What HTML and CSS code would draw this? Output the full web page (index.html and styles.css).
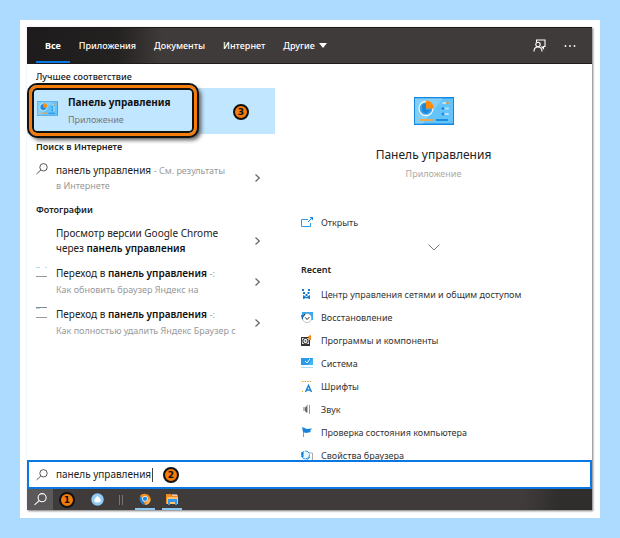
FILE: index.html
```html
<!DOCTYPE html>
<html lang="ru">
<head>
<meta charset="utf-8">
<meta name="viewport" content="width=device-width, initial-scale=1">
<title>Панель управления</title>
<link rel="stylesheet" href="styles.css">
</head>
<body>
<div class="sheet">
<div class="window">
  <header class="topbar">
    <nav class="tabs">
      <button class="tab tab-active">Все</button>
      <button class="tab">Приложения</button>
      <button class="tab">Документы</button>
      <button class="tab">Интернет</button>
      <button class="tab">Другие <svg class="caret" viewBox="0 0 8 5"><path d="M0 0h8L4 5z" fill="#fff"/></svg></button>
    </nav>
    <div class="tools">
      <button class="tool" aria-label="Отзыв"><svg width="13" height="13" viewBox="0 0 13 13" fill="none" stroke="#fff" stroke-width="1.1"><path d="M3.500 3V1H12v6.500h-1.500v2L8.500 7.500"/><circle cx="5" cy="5.500" r="2.200"/><path d="M1 12.500c0-6 8-6 8 0"/></svg></button>
      <button class="tool" aria-label="Ещё"><svg width="12" height="4" viewBox="0 0 12 4" fill="#fff"><circle cx="1.500" cy="2" r=".9"/><circle cx="6" cy="2" r=".9"/><circle cx="10.500" cy="2" r=".9"/></svg></button>
    </div>
  </header>

  <main class="content">
    <section class="results">
      <h2 class="heading heading-light">Лучшее соответствие</h2>
      <button class="best">
        <svg class="best-icon" viewBox="0 0 40 28"><use href="#panel"/></svg>
        <span class="best-text"><b>Панель управления</b><span>Приложение</span></span>
        <span class="frame"></span>
        <span class="badge badge-best">3</span>
      </button>

      <h2 class="heading">Поиск в Интернете</h2>
      <button class="row">
        <svg class="row-icon" viewBox="0 0 12 12"><use href="#lens"/></svg>
        <span class="row-text"><span class="line">панель управления <small>- См. результаты</small></span><small class="line">в Интернете</small></span>
        <svg class="arrow" viewBox="0 0 5 8"><use href="#next"/></svg>
      </button>

      <h2 class="heading">Фотографии</h2>
      <button class="row">
        <span class="row-icon"></span>
        <span class="row-text"><span class="line">Просмотр версии Google Chrome</span><span class="line">через <b>панель управления</b></span></span>
        <svg class="arrow" viewBox="0 0 5 8"><use href="#next"/></svg>
      </button>
      <button class="row row-photo">
        <svg class="row-icon" viewBox="0 0 12 12"><path d="M0 1.500h4M9 1.500h2" stroke="#a9dcf6"/><path d="M0 10.500h11" stroke="#999"/></svg>
        <span class="row-text"><span class="line">Переход в <b>панель управления</b> <small>-:</small></span><small class="line">Как обновить браузер Яндекс на</small></span>
        <svg class="arrow" viewBox="0 0 5 8"><use href="#next"/></svg>
      </button>
      <button class="row row-photo">
        <svg class="row-icon" viewBox="0 0 12 12"><path d="M0 .5h11" stroke="#888"/><path d="M0 1.500h4" stroke="#a9dcf6"/><path d="M0 10.500h11" stroke="#999"/></svg>
        <span class="row-text"><span class="line">Переход в <b>панель управления</b> <small>-:</small></span><small class="line">Как полностью удалить Яндекс Браузер с</small></span>
        <svg class="arrow" viewBox="0 0 5 8"><use href="#next"/></svg>
      </button>
    </section>

    <section class="details">
      <div class="app">
        <svg width="40" height="28" viewBox="0 0 40 28"><use href="#panel"/></svg>
        <h1 class="app-title">Панель управления</h1>
        <p class="app-kind">Приложение</p>
      </div>
      <button class="action">
        <svg class="item-icon" viewBox="0 0 12 12"><path d="M7 2.500H.5v7h9V6" fill="none" stroke="#2a9bea"/><path d="M7 5l3-3" stroke="#1683dc" fill="none"/><path d="M8.500 0H12v3.500z" fill="#1683dc"/></svg>
        Открыть
      </button>
      <button class="more" aria-label="Показать больше"><svg width="12" height="7" viewBox="0 0 12 7" fill="none" stroke="#777"><path d="M.5.5L6 6 11.500.5"/></svg></button>
      <h2 class="recent">Recent</h2>
      <ul class="list">
        <li><a class="item" href="#"><svg class="item-icon" viewBox="0 0 12 12" fill="#1b79cf"><path d="M1 0h2v2H1zM7 0h2v2H7zM2 3h2v2H2zM6.500 3h2v2h-2zM4.500 5h2v2h-2z"/><path d="M2 6l3.500 2L9 6v4H2z"/><path d="M3.500 9h4v1h-4z" fill="#bce6ff"/></svg>Центр управления сетями и общим доступом</a></li>
        <li><a class="item" href="#"><svg class="item-icon" viewBox="0 0 12 12"><path d="M1 0h11v8H1z" fill="#35a9f2"/><circle cx="6" cy="6" r="4.600" fill="#fff" stroke="#999" stroke-width=".6"/><path d="M1.500 7a4.500 4.500 0 0 1 3-5M4.500 5.500l1.500 2L8.500 5" fill="none" stroke="#333"/><path d="M0 3h4L1 7z" fill="#186fb7"/></svg>Восстановление</a></li>
        <li><a class="item" href="#"><svg class="item-icon" viewBox="0 0 12 12"><path d="M0 2h9v9H0z" fill="#333"/><path d="M1 3h7v6H1z" fill="#ddd"/><circle cx="4.500" cy="6" r="2.600" fill="#fff" stroke="#222"/><circle cx="4.500" cy="6" r=".9" fill="#555"/><path d="M7 1l3-1v5H8z" fill="#f28b18"/></svg>Программы и компоненты</a></li>
        <li><a class="item" href="#"><svg class="item-icon" viewBox="0 0 12 12"><path d="M0 0h12v7H0z" fill="#43b6f6"/><path d="M0 0h12L7 7H0z" fill="#279be9"/><path d="M4 3l2 2 3-4" fill="none" stroke="#fff"/><path d="M0 9.500h12" stroke="#a9dbf7"/></svg>Система</a></li>
        <li><a class="item" href="#"><svg class="item-icon" viewBox="0 0 12 12"><path d="M1 .5h9" stroke="#f4a21c" stroke-dasharray="1.500 1"/><path d="M1 10h1v1H1z" fill="#f4a21c"/><path d="M4.500 11l3-6.500 3 6.500M6 9h3" fill="none" stroke="#1980d7" stroke-width="1.500"/></svg>Шрифты</a></li>
        <li><a class="item" href="#"><svg class="item-icon" viewBox="0 0 12 12"><path d="M2 3h2l3-3v9L4 7H2z" fill="#bbb"/><path d="M4 4l2-2v7L4 7z" fill="#666"/><path d="M8.500 1v9" stroke="#999"/></svg>Звук</a></li>
        <li><a class="item" href="#"><svg class="item-icon" viewBox="0 0 12 12"><path d="M2.500 1v9" stroke="#999"/><path d="M1 0l5 2 5-.500-2 2.500 1 1-5 1-3-1z" fill="#1682dc"/></svg>Проверка состояния компьютера</a></li>
        <li><a class="item" href="#"><svg class="item-icon" viewBox="0 0 12 12"><path d="M5 3h6.500v8.500H3" fill="#fff" stroke="#aaa"/><circle cx="4.500" cy="5" r="4" fill="#e9f7ff" stroke="#2697e4" stroke-dasharray="5 1"/><path d="M1.500 2v5" stroke="#167bd0" stroke-width="2"/><path d="M5 8l1.500 1.500L9 7" fill="none" stroke="#2697e4"/></svg>Свойства браузера</a></li>
      </ul>
    </section>
  </main>

  <div class="search">
    <svg class="row-icon" viewBox="0 0 12 12"><use href="#lens"/></svg>
    <input class="query" type="text" aria-label="Поиск" value="панель управления">
    <span class="text-caret"></span>
    <span class="badge badge-search">2</span>
  </div>

  <footer class="taskbar">
    <button class="task task-search" aria-label="Поиск"><svg width="13" height="13" viewBox="0 0 12 12"><use href="#lens"/></svg></button>
    <span class="badge">1</span>
    <button class="task task-round" aria-label="Алиса"><svg width="13" height="13" viewBox="0 0 13 13"><circle cx="6.500" cy="6.500" r="6.200" fill="#8ecbf5"/><path d="M6.500 2.500L9 5.500c2 3 0 4-2.500 4S2 8.500 4 5.500z" fill="#fff"/></svg></button>
    <span class="divider"></span>
    <button class="task task-open" aria-label="Браузер"><svg width="12" height="12" viewBox="0 0 12 12"><path d="M1 3c2-3 8-3 10 1s-1 7-5 8z" fill="#f38a1c"/><path d="M1 3l5 9C2 11-.5 7 1 3z" fill="#1c83dc"/><path d="M6 12l3-5 2.500-1c0 3-2 6-5.500 6z" fill="#f7b45c"/><circle cx="6" cy="5.800" r="2.600" fill="#2488dd" stroke="#d8efff"/></svg></button>
    <button class="task task-open" aria-label="Проводник"><svg width="13" height="12" viewBox="0 0 13 12"><path d="M0 1h5l1 1h6v9H0z" fill="#f28a1c"/><path d="M1 4h11v7H1z" fill="#ffc273"/><path d="M2 6h9v6H9V9H4v3H2z" fill="#2f9aeb"/><path d="M6 2h5" stroke="#fff"/></svg></button>
  </footer>
</div>
</div>

<svg class="defs" width="0" height="0" aria-hidden="true">
  <symbol id="panel" viewBox="0 0 40 28">
    <path d="M0 0h40v28H0z" fill="#1687df"/><path d="M1 1.500h38v25H1z" fill="#63c3fb"/><path d="M1 1.500h28L9 26.500H1z" fill="#82cffc"/>
    <circle cx="12" cy="11.500" r="7" fill="#3da4ea" stroke="#eaf8ff" stroke-width="1.300"/><path d="M8 8v6l4 3 5-4h-5V6z" fill="#1f88d6"/><path d="M12 3.500a8 8 0 0 1 8 8h-8z" fill="#ff8b0b"/>
    <path d="M29 6h5M31 11.500h3M31 17h3" stroke="#b6e3fc" stroke-width="2" stroke-linecap="round"/><circle cx="33.500" cy="6" r="1.300" fill="#f28c28"/><path d="M27.500 11.500h3M29 10v3M27.500 17h3M29 15.500v3" stroke="#1479cf" stroke-width="1.100"/>
    <path d="M6 23h13" stroke="#f6a53e" stroke-width="1.800"/><path d="M22 23h12" stroke="#1687df" stroke-width="1.800"/>
  </symbol>
  <symbol id="lens" viewBox="0 0 12 12"><circle cx="7.500" cy="4.300" r="3.700" fill="none" stroke="currentColor"/><path d="M4.800 7L.5 11" stroke="currentColor"/></symbol>
  <symbol id="next" viewBox="0 0 5 8"><path d="M.5.5L4.300 4 .5 7.500" fill="none" stroke="#666" stroke-width="1.200"/></symbol>
</svg>
</body>
</html>
```
FILE: styles.css
```css
* { box-sizing: border-box; }
body {
  margin: 0;
  height: 100vh;
  padding: 20px;
  background: #addaff;
  color: #222;
  font: 10px/15px "Noto Sans", "Open Sans", sans-serif;
}
button, input { font: inherit; color: inherit; border: 0; padding: 0; background: none; text-align: left; }
h1, h2, p, ul { margin: 0; padding: 0; }
ul { list-style: none; }
small { font-size: 9px; color: #999; }
svg { display: block; flex: none; }
.defs { position: absolute; }

.sheet { height: 100%; padding: 7px 8px 8px 7px; background: #fff; }
.window { height: 100%; display: flex; flex-direction: column; box-shadow: 1px 1px 2px #777; background: #fff; }

.topbar {
  flex: none;
  height: 37px;
  display: flex;
  justify-content: space-between;
  padding: 0 16px 0 9px;
  background: linear-gradient(90deg, #1d1b1b, #242121 16%, #3f3b3a 24%);
  border: solid #1d1b1b;
  border-width: 1px 0;
  color: #fff;
}
.tabs { display: flex; }
.tab { display: flex; align-items: center; gap: 4px; padding: 1px 9px 0; font-size: 9px; font-weight: 500; border-bottom: 2px solid transparent; }
.tab-active { font-weight: 700; border-bottom-color: #0a78e4; }
.caret { width: 8px; height: 5px; }
.tools { display: flex; align-items: center; gap: 18px; }

.content { flex: 1; min-height: 0; display: flex; overflow: hidden; }
.results { flex: 0 0 248px; }
.heading { padding: 5px 9px 4px; font-size: 9px; line-height: 15px; font-weight: 600; }
.heading-light { font-weight: 500; }
.best { position: relative; display: flex; align-items: center; gap: 10px; width: 100%; height: 46px; padding: 0 10px; background: #c1e6ff; }
.best-icon { width: 21px; height: 15px; margin-bottom: 6px; }
.best-text { display: flex; flex-direction: column; gap: 2px; font-size: 9px; color: #777; }
.best-text b { font-size: 10px; font-weight: 700; color: #111; }
.frame { position: absolute; left: 2px; top: -3px; width: 168px; height: 51px; border: 3px solid #f57c0b; border-radius: 8px; outline: 2px solid #111; box-shadow: inset 0 0 0 2px #111, 3px 3px 4px 1px #555; }
.badge {
  flex: none;
  width: 16px;
  height: 16px;
  border: 2px solid #111;
  border-radius: 50%;
  background: #f57c0b;
  color: #111;
  font: bold 9px/12px "DejaVu Sans", sans-serif;
  text-align: center;
}
.badge-best { position: absolute; right: 26px; top: 16px; }
.row { display: flex; width: 100%; padding: 5px 15px 4px 9px; }
.row-icon { flex: none; width: 12px; height: 12px; color: #555; }
.row-text { flex: 1; min-width: 0; padding-left: 8px; }
.line { display: block; white-space: nowrap; }
.row b { font-weight: 600; color: #111; }
.arrow { width: 5px; height: 8px; align-self: center; }
.row-photo { padding-top: 6px; padding-bottom: 4px; }
.row-photo .row-text { display: flex; flex-direction: column; gap: 1px; }

.details { flex: 1; min-width: 0; padding: 33px 26px 0; }
.app { display: flex; flex-direction: column; align-items: center; }
.app-title { margin-top: 20px; font-size: 12px; line-height: 20px; font-weight: 400; }
.app-kind { margin-top: 1px; font-size: 9px; color: #aaa; }
.action, .item { display: flex; align-items: center; gap: 8px; color: #333; font-size: 9px; line-height: 15px; text-decoration: none; }
.item-icon { width: 12px; height: 12px; }
.action { margin-top: 34px; }
.more { display: block; margin: 14px auto 11px; }
.recent { font-size: 9px; line-height: 15px; font-weight: 600; }
.list { display: flex; flex-direction: column; gap: 8px; padding-top: 10px; }

.search { flex: none; height: 29px; display: flex; align-items: center; padding: 0 7px; border: 2px solid #0a78e4; background: #fff; }
.query { width: 96px; margin-left: 8px; outline: 0; }
.text-caret { width: 1px; height: 14px; background: #444; }
.badge-search { margin-left: 10px; }

.taskbar { flex: none; height: 21px; display: flex; align-items: center; background: linear-gradient(90deg, #3f3b3a 88%, #302e2d 94%); }
.task { display: flex; align-items: center; justify-content: center; width: 20px; height: 21px; }
.task-search { width: 26px; background: #5a5858; margin-right: 6px; color: #fff; }
.task-round { margin: 0 12px; }
.divider { width: 4px; height: 10px; margin-right: 12px; border: solid #777; border-width: 0 1px; }
.task-open { margin-right: 7px; border-bottom: 2px solid #8cc8f4; }
```
